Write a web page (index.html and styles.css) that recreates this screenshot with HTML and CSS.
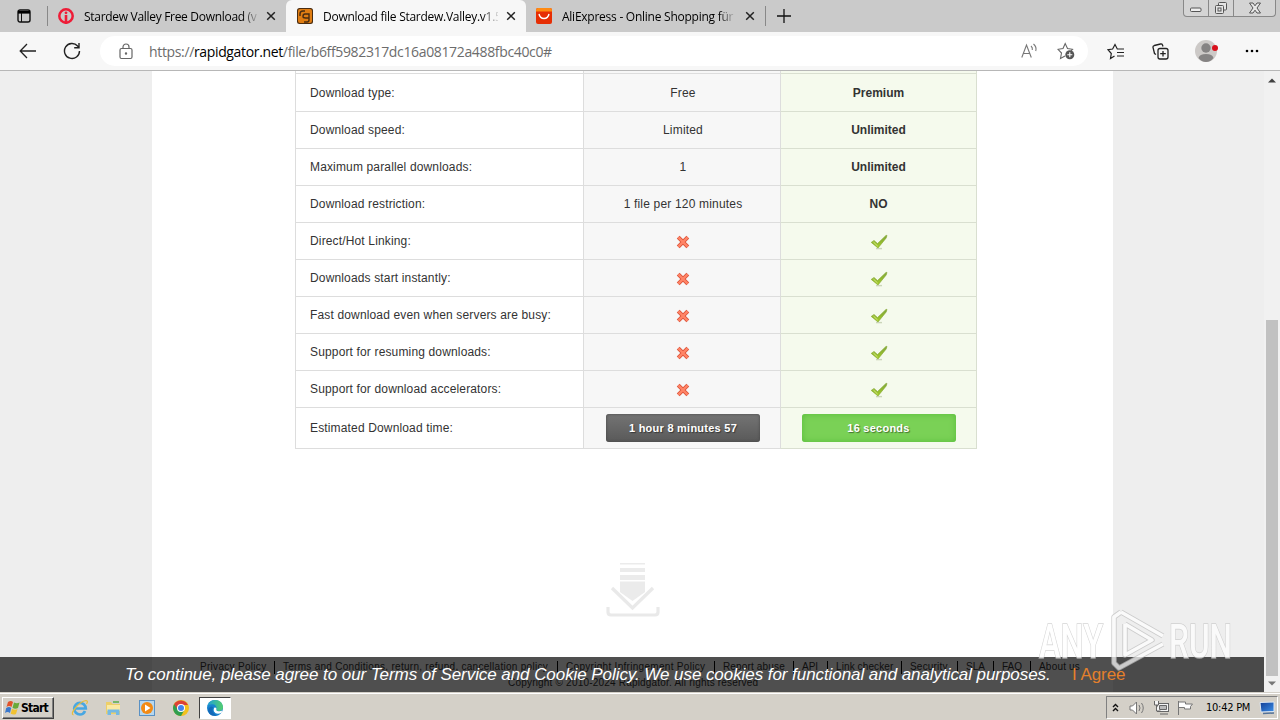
FILE: index.html
```html
<!DOCTYPE html>
<html lang="en">
<head>
<meta charset="utf-8">
<title>Download file</title>
<link rel="stylesheet" href="styles.css">
</head>
<body>
<svg class="defs" width="0" height="0">
  <defs>
    <linearGradient id="green" x1="0" y1="0" x2="0" y2="1"><stop offset="0" stop-color="#7fa63a"/><stop offset="1" stop-color="#a4cc28"/></linearGradient>
    <linearGradient id="edge" x1="0" y1="0" x2="1" y2="1"><stop offset="0" stop-color="#1b6fc8"/><stop offset=".5" stop-color="#1597d5"/><stop offset="1" stop-color="#44c878"/></linearGradient>
    <linearGradient id="wave" x1="0" y1="0" x2="1" y2="0"><stop offset="0" stop-color="#1f9fd8"/><stop offset="1" stop-color="#54cf6c"/></linearGradient>
    <linearGradient id="screen" x1="0" y1="0" x2="1" y2="1"><stop offset="0" stop-color="#123d94"/><stop offset="1" stop-color="#3c8fe8"/></linearGradient>
  </defs>
  <symbol id="close" viewBox="0 0 10 10"><path d="M1.2 1.2 8.8 8.8M8.8 1.2 1.2 8.8" stroke="#222" stroke-width="1.5" fill="none"/></symbol>
  <symbol id="cross" viewBox="0 0 16 16"><path d="M3.2 3.2 12.8 12.8M12.8 3.2 3.2 12.8" stroke="#dc5239" stroke-width="4"/><path d="M3.4 3.4 12.6 12.6M12.6 3.4 3.4 12.6" stroke="#ff8567" stroke-width="2.2"/></symbol>
  <symbol id="check" viewBox="0 0 18 16"><path d="M6 14.6h6" stroke="#cbd5ba" stroke-width="1.4"/><path d="M1.200 8.400 4 6.400 7.500 9.600 16 1.400 17 1.400 16.200 4 8 14Z" fill="url(#green)" stroke="#82a52d" stroke-width=".6"/><path d="M3.400 8 7.600 12" stroke="#d0e77f" stroke-width="1"/></symbol>
</svg>
<div class="screen">
  <header class="tabs">
    <div class="tab-menu"><svg width="14" height="14" viewBox="0 0 14 14"><rect x="1" y="1" width="12" height="12" rx="2" fill="none" stroke="#111" stroke-width="1.4"/><path d="M1 2h12v2.6H1z"/><path d="M4.5 4v9" stroke="#111"/></svg></div>
    <div class="tab first">
      <svg width="16" height="16" viewBox="0 0 16 16"><circle cx="8" cy="8" r="6.7" fill="none" stroke="#ee1c37" stroke-width="2.5"/><path d="M8 7v9" stroke="#ee1c37" stroke-width="2.6"/><circle cx="8" cy="4.8" r="1.4" fill="#ee1c37"/></svg>
      <span class="tab-title t1">Stardew Valley Free Download (v</span>
      <svg class="x" width="10" height="10"><use href="#close"/></svg>
    </div>
    <div class="tab active">
      <svg width="16" height="16" viewBox="0 0 16 16"><rect width="16" height="16" rx="2.5" fill="#4a2c10"/><rect x="1" y="1" width="14" height="14" rx="2" fill="#e07d12"/><path d="M3 8V6q0-3 3-3h2M6 8.500q0-2.500 2-2.500h4v6q0 2-2 2H7M12 10H8.500Q6 10 6 8.500" stroke="#4a2c10" stroke-width="1.400" fill="none"/></svg>
      <span class="tab-title t2">Download file Stardew.Valley.v1.5</span>
      <svg class="x" width="10" height="10"><use href="#close"/></svg>
    </div>
    <div class="tab third">
      <svg width="16" height="16" viewBox="0 0 16 16"><rect width="16" height="16" rx="2" fill="#e62e04"/><path d="M0 2q0-2 2-2h12q2 0 2 2v1.500H0z" fill="#ff8a12"/><path d="M3 6q1 4.500 5 4.500T13 6" stroke="#fff" stroke-width="1.400" fill="none"/></svg>
      <span class="tab-title t3">AliExpress - Online Shopping für</span>
      <svg class="x" width="10" height="10"><use href="#close"/></svg>
    </div>
    <div class="new-tab"><svg width="14" height="14"><path d="M7 0v14M0 7h14" stroke="#111" stroke-width="1.300"/></svg></div>
    <div class="window-buttons">
      <span class="wb min"><svg width="12" height="6"><rect x=".5" y="1" width="10.500" height="3.500" rx="1" fill="#eee" stroke="#555"/></svg></span>
      <span class="wb max"><svg width="14" height="14" fill="#e4e4e4" stroke="#555"><rect x="4.500" y="1.500" width="8" height="7.500" rx="1"/><rect x="1.500" y="4.500" width="8" height="8" rx="1"/><rect x="4" y="7" width="3" height="3"/></svg></span>
      <span class="wb cls"><svg width="14" height="12" viewBox="0 0 14 12"><path d="M1.500 1h3.500l2 2.800L9 1h3.500L9 6l3.500 5H9L7 8.200 5 11H1.500L5 6z" fill="#e8e8e8" stroke="#555"/></svg></span>
    </div>
  </header>

  <nav class="toolbar">
    <svg class="back" width="18" height="16" viewBox="0 0 18 16" fill="none" stroke="#222" stroke-width="1.300"><path d="M17 8H1.500M8 1 1.200 8 8 15"/></svg>
    <svg class="reload" width="18" height="18" viewBox="0 0 18 18" fill="none" stroke="#222" stroke-width="1.400"><path d="M16.500 9A7.500 7.500 0 1 1 14.600 4L16 5.500M16 1v4.800h-4.800"/></svg>
    <div class="address">
      <svg class="lock" width="14" height="17" viewBox="0 0 14 17" fill="none" stroke="#666" stroke-width="1.200"><rect x="1" y="5.500" width="12" height="10" rx="1.500"/><path d="M4 5.500V4a3 3 0 0 1 6 0v1.500"/><circle cx="7" cy="10.500" r=".6" fill="#666"/></svg>
      <span class="url">https://<b>rapidgator.net</b>/file/b6ff5982317dc16a08172a488fbc40c0#</span>
      <svg class="aloud" width="17" height="16" viewBox="0 0 17 16" fill="none" stroke="#777" stroke-width="1.100"><path d="M.8 14.500 5.500 2 10.300 14.500M2.500 10.500h6.200M10 3q1.800 1.500 1.300 4M12.500 1q3.500 3 2.200 7"/></svg>
      <svg class="fav" width="18" height="18" viewBox="0 0 18 18" fill="none" stroke="#666" stroke-width="1.100"><path d="M8 14 3.500 16.500 4.500 11 1 7.300l5-.8L8.200 1.500l2.300 5 5 .8-1.500 1.500"/><circle cx="12.800" cy="12.800" r="4.500" fill="#555" stroke="none"/><path d="M12.800 10.300v5M10.300 12.800h5" stroke="#fff"/></svg>
    </div>
    <svg class="star" width="18" height="17" viewBox="0 0 18 17" fill="none" stroke="#222" stroke-width="1.200"><path d="M7.500 13 3.500 15.500 4.300 10.500 1 6.700l4.600-.7L8 1.500 10.300 6H17M10 9.500h7M10 13h7"/></svg>
    <svg class="collections" width="17" height="17" viewBox="0 0 17 17" fill="none" stroke="#222" stroke-width="1.300"><path d="M4 11.500 2.500 10.500 1 4.500Q.8 3 2.300 2.500L8.500 1q1.500-.3 2 1l.5 1.500"/><rect x="6" y="5.500" width="10" height="10.500" rx="2"/><path d="M11 8v5.500M8.200 10.700h5.600"/></svg>
    <svg class="profile" width="24" height="22" viewBox="0 0 24 22"><circle cx="11" cy="11" r="11" fill="#ccc9c7"/><circle cx="11" cy="8" r="4.700" fill="#858383"/><path d="M3.500 18q1-4 7.500-4t7.500 4q-3 4-7.500 4T3.500 18" fill="#858383"/><circle cx="20" cy="8" r="3" fill="#d8101c"/></svg>
    <svg class="more" width="14" height="4"><circle cx="2" cy="2" r="1.300"/><circle cx="7" cy="2" r="1.300"/><circle cx="12" cy="2" r="1.300"/></svg>
  </nav>

  <main class="viewport">
    <div class="page">
      <div class="compare">
        <div class="row lead"><div></div><div></div><div></div></div>
        <div class="row tall"><div>Download type:</div><div>Free</div><div>Premium</div></div>
        <div class="row"><div>Download speed:</div><div>Limited</div><div>Unlimited</div></div>
        <div class="row"><div>Maximum parallel downloads:</div><div>1</div><div>Unlimited</div></div>
        <div class="row"><div>Download restriction:</div><div>1 file per 120 minutes</div><div>NO</div></div>
        <div class="row"><div>Direct/Hot Linking:</div><div><svg class="cross"><use href="#cross"/></svg></div><div><svg class="check"><use href="#check"/></svg></div></div>
        <div class="row"><div>Downloads start instantly:</div><div><svg class="cross"><use href="#cross"/></svg></div><div><svg class="check"><use href="#check"/></svg></div></div>
        <div class="row"><div>Fast download even when servers are busy:</div><div><svg class="cross"><use href="#cross"/></svg></div><div><svg class="check"><use href="#check"/></svg></div></div>
        <div class="row"><div>Support for resuming downloads:</div><div><svg class="cross"><use href="#cross"/></svg></div><div><svg class="check"><use href="#check"/></svg></div></div>
        <div class="row"><div>Support for download accelerators:</div><div><svg class="cross"><use href="#cross"/></svg></div><div><svg class="check"><use href="#check"/></svg></div></div>
        <div class="row last"><div>Estimated Download time:</div><div><span class="pill dark">1 hour 8 minutes 57</span></div><div><span class="pill lime">16 seconds</span></div></div>
      </div>
      <svg class="download" width="54" height="56" viewBox="0 0 54 56"><path d="M14 1h25v1.500H14zM14 6h25v4H14zM14 13h25v5H14zM14 19.500h25v10.500L26.500 39 14 30z" fill="#ebebeb"/><path d="M6 26 26.500 46 47 26M2 45v5q0 3 3 3h44q3 0 3-3v-5" fill="none" stroke="#e9e9e9" stroke-width="3.200"/></svg>
      <footer>
        <div class="links"><a class="l1">Privacy Policy</a><a class="l2">Terms and Conditions, return, refund, cancellation policy</a><a class="l3">Copyright Infringement Policy</a><a class="l4">Report abuse</a><a class="l5">API</a><a class="l6">Link checker</a><a class="l7">Security</a><a class="l8">SLA</a><a class="l9">FAQ</a><a class="l10">About us</a></div>
        <div class="copyright">Copyright © 2010-2024 Rapidgator. All rights reserved</div>
      </footer>
    </div>
    <div class="scrollbar">
      <svg width="8" height="5"><path d="M0 4.500h8L4 .5z" fill="#404040"/></svg>
      <div class="thumb"></div>
      <svg width="8" height="5"><path d="M0 .5h8L4 4.500z" fill="#777"/></svg>
    </div>
    <div class="cookie"><em>To continue, please agree to our Terms of Service and Cookie Policy. We use cookies for functional and analytical purposes.</em><a>I Agree</a></div>
    <svg class="watermark" width="200" height="64" viewBox="0 0 200 64">
      <g class="mark"><text x="2" y="50" textLength="64" lengthAdjust="spacingAndGlyphs">ANY</text><text x="132" y="50" textLength="63" lengthAdjust="spacingAndGlyphs">RUN</text></g>
      <path class="halo" d="M84 4 77 9V55L82 60 126 36M84 4 126 28M88 16V47L115 32 88 16"/><path class="tri" d="M84 4 77 9V55L82 60 126 36M84 4 126 28M88 16V47L115 32 88 16"/>
    </svg>
  </main>

  <div class="taskbar">
    <div class="start"><svg width="15" height="15" viewBox="0 0 15 15"><path d="M3 2q3-2 5 0L6.500 7Q4 5 1.500 7z" fill="#e2532b"/><path d="M9 2.500q3 1.500 5.500 0L13 8q-3 1.500-5.500-.3z" fill="#69a93a"/><path d="M1.200 8q3-1.800 5 0L5 13q-2.500-2-5 0z" fill="#3a78cd"/><path d="M7 8.800q3 1.500 5.500.3L11 14q-2.500 1.200-5.300-.2z" fill="#f1c232"/></svg><b>Start</b></div>
    <svg class="q1" width="18" height="18" viewBox="0 0 18 18" fill="none"><path d="M14 12q-1.500 3.500-5 3.500a5.800 5.800 0 1 1 5.800-6H4.500" stroke="#48a7e2" stroke-width="2.700"/><path d="M2.500 16Q-.5 15 4 9.500 10 2 15 1.500q2.500.5.500 3.500" stroke="#e7bd3b" stroke-width="1.200"/></svg>
    <svg class="q2" width="17" height="16" viewBox="0 0 17 16"><path d="M1 2h5l1.500 2H15v10H1z" fill="#edcf69"/><path d="M2 5h13v6H2z" fill="#fae9a4"/><path d="M2.500 15V9.500h12V15H11v-2.500H6V15z" fill="#75b9e3"/><path d="M8 1h6v2H8z" fill="#77b767"/></svg>
    <svg class="q3" width="16" height="16" viewBox="0 0 16 16"><rect x=".5" y=".5" width="15" height="15" fill="#b6d7ef" stroke="#5a91c4"/><circle cx="8" cy="8" r="6" fill="#f28a14"/><path d="M6 4.500 11.500 8 6 11.500z" fill="#fff"/></svg>
    <svg class="q4" width="16" height="16" viewBox="0 0 16 16"><circle cx="8" cy="8" r="8" fill="#f2c11d"/><path d="M1.100 4A8 8 0 0 0 8 16L11.400 10 8 8z" fill="#2f9e4f"/><path d="M1.100 4 5 10l3-5h7A8 8 0 0 0 1.100 4" fill="#dc4135"/><circle cx="8" cy="8" r="4" fill="#fff"/><circle cx="8" cy="8" r="3" fill="#4384ec"/></svg>
    <div class="task"><svg width="16" height="16" viewBox="0 0 16 16"><circle cx="8" cy="8" r="8" fill="#1683cf"/><path d="M.4 6Q2 0 8 0q7 0 8 7 0 4-4.500 4-3 0-2-2.500Q9.500 4.500 5.500 4.300 2 4.200.4 6" fill="url(#wave)"/><path d="M6 7q-2 6 4 8.500Q4 17 1.500 12 0 8 4 6.500z" fill="#1469b8"/><path d="M9.500 8.500Q8.500 11 11.500 11.200q2.500.2 3.700-.7L14.500 13Q9 15 7 11.500 6 8.500 8 7.200z" fill="#fff"/></svg></div>
    <div class="tray">
      <svg class="s1" width="7" height="9" fill="none" stroke="#111" stroke-width="1.400"><path d="M1 4 3.500 1.500 6 4M1 8 3.500 5.500 6 8"/></svg>
      <svg class="s2" width="16" height="14" fill="#fff" stroke="#777"><path d="M1 5h2.500l4-4v12l-4-4H1z"/><path d="M10 4q2 3 0 6M12.500 2q3.500 5 0 10" fill="none"/></svg>
      <svg class="s3" width="16" height="15" fill="#f4f4f4" stroke="#666"><rect x="4.500" y="3.500" width="11" height="8"/><path d="M7 14h8M1.500 1v4h4V1M3.500 5v6h4"/><path d="M6.500 5.500h7v4h-7z" fill="#bbb"/></svg>
      <svg class="s4" width="17" height="15" fill="#fff" stroke="#777"><path d="M1.500 1v14M1.500 2h7v2h7q-3 2.500-2 5H7.500V7.500h-6z"/></svg>
      <span class="clock">10:42 PM</span>
      <svg class="s5" width="16" height="14"><path d="M1 1.500 15 1v9.500L2 11z" fill="url(#screen)" stroke="#dce7f4"/><path d="M4 12.500 15 12" stroke="#537298" stroke-width="1.500"/></svg>
    </div>
  </div>
</div>
</body>
</html>
```
FILE: styles.css
```css
* { box-sizing: border-box; }
body { margin: 0; overflow: hidden; }
svg { display: block; flex: none; }
.defs { position: absolute; }
.screen { width: 1280px; height: 720px; display: flex; flex-direction: column; font-family: "Liberation Sans", Arial, sans-serif; overflow: hidden; }

.tabs { height: 32px; flex: none; display: flex; background: #cacaca; font: 12px "Open Sans", "Noto Sans", sans-serif; color: #000; }
.tab-menu { width: 48px; height: 20px; margin-top: 6px; padding: 3px 0 0 17px; border-right: 1px solid #888; }
.tab { display: flex; align-items: center; height: 32px; }
.first { width: 238px; padding-left: 10px; }
.active { width: 240px; padding-left: 11px; background: #f7f7f7; border-radius: 6px 6px 0 0; }
.third { width: 239px; padding-left: 10px; }
.tab-title { margin-left: 10px; overflow: hidden; white-space: nowrap; -webkit-mask-image: linear-gradient(90deg, #000 91%, rgba(0,0,0,.1)); mask-image: linear-gradient(90deg, #000 91%, rgba(0,0,0,.1)); }
.t1 { width: 174px; letter-spacing: -.3px; }
.t2 { width: 175px; letter-spacing: -.27px; }
.t3 { width: 172px; letter-spacing: -.25px; }
.x { margin-left: 8px; }
.third .x { margin-left: 11px; }
.new-tab { width: 30px; height: 20px; margin-top: 6px; padding: 3px 0 0 11px; border-left: 1px solid #888; }
.window-buttons { margin-left: auto; margin-right: 4px; width: 93px; height: 17px; display: flex; border: 1px solid #888; border-top: 0; border-radius: 0 0 4px 4px; background: #d4d4d4; }
.wb { display: flex; justify-content: center; align-items: center; border-right: 1px solid #888; }
.wb.min { width: 25px; padding-top: 4px; }
.wb.max { width: 25px; }
.wb.cls { flex: 1; border: 0; }

.toolbar { height: 39px; flex: none; display: flex; align-items: center; padding-left: 19px; background: #f7f7f7; border-bottom: 1px solid #b7b7b7; }
.reload { margin-left: 26px; }
.address { width: 988px; height: 30px; margin-left: 19px; border-radius: 15px; background: #fff; display: flex; align-items: center; padding-left: 19px; }
.url { margin-left: 16px; width: 404px; white-space: nowrap; color: #6c6c6c; font: 14px "Open Sans", "Noto Sans", sans-serif; letter-spacing: -.35px; }
.url b { font-weight: 400; color: #000; }
.aloud { margin-left: 468px; }
.fav { margin-left: 19px; }
.star { margin-left: 19px; }
.collections { margin-left: 27px; }
.profile { margin-left: 26px; }
.more { margin-left: 26px; }

.viewport { position: relative; height: 621px; flex: none; background: #eee; display: flex; overflow: hidden; }
.page { width: 961px; margin-left: 152px; height: 621px; background: #fff; }
.compare { width: 682px; margin-left: 143px; border-left: 1px solid #ddd; border-right: 1px solid #d9dfd0; font-size: 12px; color: #333; }
.row { display: grid; grid-template-columns: 287px 197px 196px; height: 37px; }
.row > div { border-bottom: 1px solid #ddd; display: flex; align-items: center; justify-content: center; }
.row > div:nth-child(1) { justify-content: flex-start; padding-left: 14px; letter-spacing: .15px; }
.row > div:nth-child(2) { background: #f7f7f7; border-left: 1px solid #ddd; padding-left: 2px; letter-spacing: .18px; }
.row > div:nth-child(3) { background: #f5faed; border-left: 1px solid #ddd; border-bottom-color: #d9dfd0; font-weight: 700; }
.row.lead { height: 3px; }
.row.tall { height: 38px; }
.row.last { height: 41px; }
.cross { width: 16px; height: 16px; margin-top: 2px; }
.check { width: 18px; height: 16px; margin-top: 2px; }
.pill { width: 154px; height: 28px; border-radius: 3px; color: #fff; font-size: 11px; font-weight: 700; text-align: center; line-height: 28px; text-shadow: 1px 1px 1px rgba(0,0,0,.45); letter-spacing: .25px; }
.dark { background: linear-gradient(#747474, #595959); box-shadow: inset 0 0 3px #444; }
.lime { background: #7ad156; box-shadow: inset 0 0 6px #58bd3a; }
.download { margin: 113px 0 0 454px; }
footer { padding: 43px 0 0 40px; font-size: 10px; line-height: 12px; color: #333; }
.links { display: flex; }
.links a { height: 13px; padding-left: 8px; white-space: nowrap; border-left: 1px solid #000; }
.links .l1 { width: 82px; border-left-color: transparent; padding-left: 7px; letter-spacing: .3px; }
.l2 { width: 283px; letter-spacing: .28px; }
.l3 { width: 157px; letter-spacing: .3px; }
.l4 { width: 79px; letter-spacing: .15px; }
.l5 { width: 34px; }
.l6 { width: 74px; letter-spacing: .1px; }
.l7 { width: 56px; letter-spacing: .2px; }
.l8 { width: 36px; }
.l9 { width: 37px; }
.l10 { width: 60px; letter-spacing: .2px; }
.copyright { margin: 3px 0 0 316px; letter-spacing: .2px; white-space: nowrap; }
.scrollbar { width: 16px; height: 621px; margin-left: auto; background: #f1f1f1; display: flex; flex-direction: column; align-items: center; padding-top: 7px; }
.thumb { width: 12px; height: 356px; margin: 237px 0 5px; background: #c1c1c1; }
.cookie { position: absolute; left: 0; bottom: 0; width: 1264px; height: 35px; padding-left: 125px; background: rgba(0,0,0,.69); color: #fff; display: flex; align-items: center; white-space: nowrap; font-size: 17px; letter-spacing: -.065px; }
.cookie em { width: 947px; }
.cookie a { color: #e4802c; }
.watermark { position: absolute; left: 1037px; top: 537px; opacity: .72; }
.mark text { font: 500 48px Roboto, sans-serif; fill: #fff; stroke: #c4c4c4; stroke-width: 1.6px; paint-order: stroke; }
.halo { fill: none; stroke: #c0c0c0; stroke-width: 5.4px; stroke-linejoin: round; }
.tri { fill: none; stroke: #fff; stroke-width: 3.6px; stroke-linejoin: round; }

.taskbar { height: 28px; flex: none; display: flex; align-items: center; background: #d4d0c8; border-top: 1px solid #d4d0c8; box-shadow: inset 0 1px #fff; padding: 2px 2px 0; }
.start { width: 52px; height: 22px; padding: 0 0 0 2px; display: flex; align-items: center; border: 1px solid; border-color: #fff #404040 #404040 #fff; box-shadow: inset -1px -1px #808080; }
.start b { margin-left: 1px; font: 700 12px "DejaVu Sans Condensed", "DejaVu Sans", sans-serif; letter-spacing: -.75px; }
.q1 { margin-left: 17px; }
.q2 { margin-left: 16px; }
.q3 { margin-left: 17px; }
.q4 { margin-left: 18px; }
.task { width: 32px; height: 22px; margin-left: 10px; padding: 2px 0 0 7px; background: #fff; border: 1px solid; border-color: #404040 #fff #fff #404040; }
.tray { margin-left: auto; width: 172px; height: 23px; display: flex; align-items: center; padding-left: 5px; border: 1px solid; border-color: #808080 #fff #fff #808080; }
.s2 { margin-left: 10px; }
.s3 { margin-left: 8px; }
.s4 { margin-left: 8px; }
.clock { margin-left: 12px; width: 46px; white-space: nowrap; font: 11px "DejaVu Sans Condensed", "DejaVu Sans", sans-serif; letter-spacing: -.25px; }
.s5 { margin-left: 7px; }
```
